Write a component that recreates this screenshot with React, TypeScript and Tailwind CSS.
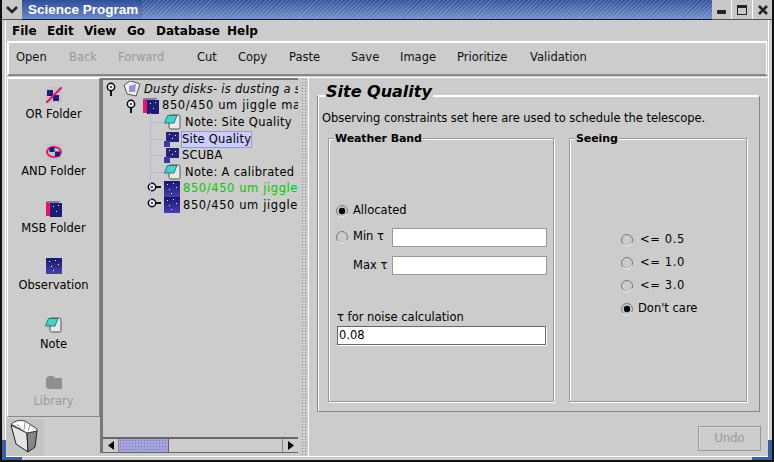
import React from "react";

const font = "font-['DejaVu_Sans',sans-serif]";

function Handle({ open }: { open: boolean }) {
  return (
    <svg width="14" height="14" viewBox="0 0 14 14" className="shrink-0">
      {open ? <path d="M5 9V14" stroke="#000" strokeWidth="1.8" /> : <path d="M9 5H14" stroke="#000" strokeWidth="1.8" />}
      <circle cx="5" cy="5" r="3.7" fill="#e8e8f8" stroke="#000" strokeWidth="1.4" />
      <circle cx="5" cy="5" r="1.1" fill="#333366" />
    </svg>
  );
}

function Obs({ s = 16 }: { s?: number }) {
  return (
    <svg width={s} height={s} viewBox="0 0 16 16" className="shrink-0">
      <defs>
        <linearGradient id="ob" x1="0" y1="0" x2="0" y2="1">
          <stop offset="0" stopColor="#17176b" />
          <stop offset="1" stopColor="#4a3fb0" />
        </linearGradient>
      </defs>
      <rect width="16" height="16" fill="url(#ob)" />
      <path d="M3 3h1v1H3zM9 2h1v1H9zM12 6h1v1h-1zM5 8h1v1H5zM7 12h1v1H7z" fill="#fff" />
    </svg>
  );
}

function Msb() {
  return (
    <svg width="16" height="16" viewBox="0 0 16 16" className="shrink-0">
      <rect x="0" y="1" width="4" height="14" fill="#f0106a" />
      <path d="M0 1L2 0H15L12 2H4z" fill="#7a7ab8" />
      <rect x="4" y="2" width="12" height="14" fill="#1c1c70" />
      <path d="M7 5h1v1H7zM12 4h1v1h-1zM10 10h1v1h-1z" fill="#fff" />
    </svg>
  );
}

function Sub() {
  return (
    <svg width="15" height="15" viewBox="0 0 15 15" className="shrink-0">
      <rect x="2" y="0" width="13" height="10" fill="#24247e" />
      <rect x="0" y="9" width="6" height="6" fill="#3a3aa0" />
      <path d="M5 2h1v1H5zM11 3h1v1h-1zM8 6h1v1H8z" fill="#fff" />
    </svg>
  );
}

function Note() {
  return (
    <svg width="17" height="16" viewBox="0 0 17 16" className="shrink-0">
      <rect x="5" y="1" width="11" height="14" rx="1.5" fill="#e8e8e8" stroke="#555" />
      <path d="M3.5 1.5H13L10 9H0.5z" fill="#45d4cc" stroke="#1e6d6d" strokeWidth="0.9" />
    </svg>
  );
}

function Radio({ on }: { on?: boolean }) {
  return (
    <svg width="14" height="14" viewBox="0 0 14 14" className="shrink-0">
      <circle cx="7" cy="7" r="5.5" fill="#ccc" stroke="#777" />
      <path d="M3 11.5A6 6 0 0 0 12 10" stroke="#fff" fill="none" />
      {on && <circle cx="7" cy="7" r="3.2" fill="#000" />}
    </svg>
  );
}

function PaletteItem({ icon, label, h, dim }: { icon: React.ReactNode; label: string; h: string; dim?: boolean }) {
  return (
    <div className={`flex flex-col items-center ${h}`}>
      <div className="h-[16px] flex items-center justify-center">{icon}</div>
      <span className={`text-[11.5px] leading-[14px] mt-[4px] ${dim ? "text-[#999]" : "text-black"}`}>{label}</span>
    </div>
  );
}

function TreeRow({ indent, children }: { indent: string; children: React.ReactNode }) {
  return <div className={`h-[16.6px] flex items-center whitespace-nowrap ${indent}`}>{children}</div>;
}

function Branch() {
  return <div className="w-[14px] h-[1px] shrink-0 bg-[#b8b8dc]" />;
}

const tools: [string, string, boolean?][] = [
  ["Open", "w-[53px]"],
  ["Back", "w-[49px]", true],
  ["Forward", "w-[79px]", true],
  ["Cut", "w-[41px]"],
  ["Copy", "w-[51px]"],
  ["Paste", "w-[62px]"],
  ["Save", "w-[49px]"],
  ["Image", "w-[57px]"],
  ["Prioritize", "w-[73px]"],
  ["Validation", "w-[70px]"],
];

const menus: [string, string][] = [
  ["File", "w-[35px]"],
  ["Edit", "w-[37px]"],
  ["View", "w-[43px]"],
  ["Go", "w-[29px]"],
  ["Database", "w-[71px]"],
  ["Help", "w-[40px]"],
];

export default function App() {
  return (
    <div className={`${font} relative w-[774px] h-[462px] overflow-hidden bg-[#cccccc] text-[11.5px] text-black flex flex-col border-l-2 border-r-2 border-b-2 border-[#111]`}>
      {/* title bar */}
      <div className="h-[20px] flex shrink-0">
        <div className="w-[20px] flex items-center justify-center bg-[#c8c8c8] border-b border-[#555]">
          <svg width="12" height="8" viewBox="0 0 12 8"><path d="M1 1L6 6L11 1" stroke="#222" strokeWidth="2.6" fill="none" /></svg>
        </div>
        <div className="w-[120px] shrink-0 flex items-center pl-[6px] border-b border-[#0d1a3a] bg-[linear-gradient(180deg,#2f4f9b,#6d8ac6)]">
          <span className="text-white font-['Liberation_Sans',sans-serif] font-bold text-[13.5px] leading-none whitespace-nowrap">Science Program</span>
        </div>
        <div className="flex-1 border-b border-[#0d1a3a] bg-[repeating-linear-gradient(135deg,rgba(255,255,255,0.16)_0px,rgba(255,255,255,0.16)_1.5px,transparent_1.5px,transparent_3px),linear-gradient(180deg,#2f4f9b,#6d8ac6)]" />
        <div className="w-[60px] flex bg-[#c8c8c8] border-b border-[#555]">
          <div className="w-[20px] flex items-center justify-center border-r border-white"><div className="w-[9px] h-[4px] bg-[#222] mt-[5px] rounded-[1px]" /></div>
          <div className="w-[21px] flex items-center justify-center border-r border-white"><div className="w-[10px] h-[10px] border border-[#222] border-t-[3px]" /></div>
          <div className="w-[19px] flex items-center justify-center">
            <svg width="10" height="10" viewBox="0 0 10 10"><path d="M1 1L9 9M9 1L1 9" stroke="#222" strokeWidth="2.6" /></svg>
          </div>
        </div>
      </div>

      {/* window body */}
      <div className="flex-1 min-h-0 flex flex-col ml-[3px] mr-[3px] mb-[3px] border-l border-r border-b border-white">
        {/* menu */}
        <div className="h-[21px] flex items-center pl-[6px] shrink-0 font-bold text-[12px]">
          {menus.map(([m, w]) => <span key={m} className={`${w}`}>{m}</span>)}
        </div>
        {/* toolbar */}
        <div className="h-[35px] shrink-0 mx-[1px] flex items-center pl-[7px] pb-[2px] border border-t-2 border-l-2 border-t-white border-l-white border-r-[#888] border-b-2 border-b-[#888] border-r-white">
          {tools.map(([t, w, d]) => <span key={t} className={`${w} ${d ? "text-[#999]" : "text-[#111]"}`}>{t}</span>)}
        </div>
        {/* main */}
        <div className="flex-1 min-h-0 flex border-t border-white mt-[1px]">
          {/* palette column */}
          <div className="w-[94px] shrink-0 flex flex-col pl-[1px]">
            <div className="h-[340px] border border-[#888] border-t-white border-l-white flex flex-col pt-[8px]">
              <PaletteItem h="h-[57px]" label="OR Folder" icon={
                <svg width="16" height="16" viewBox="0 0 16 16"><rect width="16" height="16" fill="#c4c4c4" /><rect x="1" y="3" width="6" height="6" fill="#1c1c80" /><rect x="7" y="8" width="6" height="6" fill="#1c1c80" /><path d="M0 16L16 0" stroke="#f0106a" strokeWidth="2" /></svg>
              } />
              <PaletteItem h="h-[57px]" label="AND Folder" icon={
                <svg width="16" height="16" viewBox="0 0 16 16"><rect width="16" height="16" fill="#c4c4c4" /><ellipse cx="8" cy="8" rx="7" ry="5" fill="none" stroke="#f0106a" strokeWidth="2" /><rect x="3.5" y="3" width="5" height="5" fill="#1c1c80" /><rect x="9" y="7.5" width="5" height="5" fill="#1c1c80" /></svg>
              } />
              <PaletteItem h="h-[57px]" label="MSB Folder" icon={<Msb />} />
              <PaletteItem h="h-[59px]" label="Observation" icon={<Obs />} />
              <PaletteItem h="h-[57px]" label="Note" icon={<Note />} />
              <PaletteItem h="h-[40px]" dim label="Library" icon={
                <svg width="16" height="13" viewBox="0 0 16 13"><path d="M0 3Q1 0 4 0H7L9 2H16V13H3Q0 13 0 10z" fill="#8f8f8f" /></svg>
              } />
            </div>
            <div className="h-[39px] pt-[2px]">
              <svg width="37" height="37" viewBox="0 0 37 37" className="bg-[#c4c4c4]">
                <path d="M4 6L9 25L21 33L20 14z" fill="#e4e4e4" stroke="#222" />
                <path d="M20 14L30 12L28 28L21 33z" fill="#858585" stroke="#222" />
                <path d="M4 5Q10 0 18 2L30 10V12L20 14z" fill="#ffffff" stroke="#444" />
                <path d="M10 5L15 11M18 3L17 11M23 6L21 12" stroke="#999" fill="none" />
              </svg>
            </div>
          </div>

          {/* tree column */}
          <div className="w-[198px] shrink-0 mb-[3px] border-l-[3px] border-t-2 border-[#777] flex flex-col bg-[#cccccc]">
            <div className="flex-1 min-h-0 overflow-hidden pt-[1.5px] relative">
              <div className="absolute left-[47px] top-[33px] w-[1px] h-[88px] bg-[#b8b8dc]" />
              <TreeRow indent="pl-[3px] gap-[3px] -mt-[0.5px]">
                <Handle open />
                <svg width="18" height="16" viewBox="0 0 18 16" className="shrink-0"><path d="M1 4L7 0L11 1L17 3L13 15L4 13z" fill="#eee" stroke="#555" /><path d="M6 5L13 3L12 11L6 11z" fill="#9b8fe0" /></svg>
                <span className="italic tracking-[0.25px]">Dusty disks- is dusting a s</span>
              </TreeRow>
              <TreeRow indent="pl-[23px] gap-[3px]">
                <Handle open />
                <Msb />
                <span className="tracking-[0.6px]">850/450 um jiggle ma</span>
              </TreeRow>
              <TreeRow indent="pl-[47px]"><Branch /><Note /><span className="ml-[4px] tracking-[0.3px]">Note: Site Quality</span></TreeRow>
              <TreeRow indent="pl-[47px]"><Branch /><Sub /><span className="ml-[2px] bg-[#ccccff] border border-[#9999cc] leading-[15px] tracking-[0.2px]">Site Quality</span></TreeRow>
              <TreeRow indent="pl-[47px]"><Branch /><Sub /><span className="ml-[3px] tracking-[0.2px]">SCUBA</span></TreeRow>
              <TreeRow indent="pl-[47px]"><Branch /><Note /><span className="ml-[4px] tracking-[0.3px]">Note: A calibrated 8</span></TreeRow>
              <TreeRow indent="pl-[44px] gap-[3px]"><Handle open={false} /><Obs /><span className="text-[#00c800] tracking-[0.6px]">850/450 um jiggle</span></TreeRow>
              <TreeRow indent="pl-[44px] gap-[3px]"><Handle open={false} /><Obs /><span className="tracking-[0.6px]">850/450 um jiggle</span></TreeRow>
            </div>
            {/* horizontal scrollbar */}
            <div className="h-[16px] shrink-0 flex border-t-2 border-b border-[#666]">
              <div className="w-[16px] flex items-center justify-center border-r border-[#888]"><svg width="6" height="9" viewBox="0 0 6 9"><path d="M6 0V9L0 4.5z" /></svg></div>
              <div className="w-[50px] bg-[#a5a5dc] border-r border-[#666] bg-[radial-gradient(#7070b0_1px,transparent_1px)] bg-[length:3px_3px]" />
              <div className="flex-1" />
              <div className="w-[16px] flex items-center justify-center border-l border-[#888]"><svg width="6" height="9" viewBox="0 0 6 9"><path d="M0 0V9L6 4.5z" /></svg></div>
            </div>
          </div>

          {/* divider */}
          <div className="w-[11px] shrink-0 flex justify-center border-r border-white">
            <div className="w-[5px] h-full bg-[radial-gradient(#8c8c8c_1px,transparent_1px)] bg-[length:3px_3px]" />
          </div>

          {/* right panel */}
          <div className="flex-1 min-w-0 flex flex-col pl-[8px] pr-[8px]">
            <div className="relative mt-[17px] h-[317px] border border-[#888] border-t-white border-l-[#888] shadow-[inset_1px_1px_0_#fff]">
              <span className="absolute left-[7px] top-[-14px] px-[1px] bg-[#cccccc] italic font-bold text-[16px] leading-[20px]">Site Quality</span>
              <p className="pl-[4px] mt-[15px] leading-[14px] tracking-[-0.05px] whitespace-nowrap">Observing constraints set here are used to schedule the telescope.</p>
              <div className="flex gap-[15px] ml-[10px] mt-[13px] h-[264px]">
                {/* weather */}
                <div className="relative w-[226px] border border-[#999] shadow-[inset_1px_1px_0_#fff,1px_1px_0_#fff] flex flex-col pl-[8px] pt-[58px]">
                  <span className="absolute left-[5px] top-[-7px] px-[1px] bg-[#cccccc] font-bold text-[11px] tracking-[-0.1px] leading-[14px]">Weather Band</span>
                  <div className="h-[26px] flex items-center gap-[4px] -ml-[2px] mt-[1px]"><Radio on /><span>Allocated</span></div>
                  <div className="h-[26px] flex items-center -ml-[2px]">
                    <Radio /><span className="ml-[4px] w-[39px]">Min τ</span>
                    <div className="w-[155px] h-[19px] bg-white border border-[#999]" />
                  </div>
                  <div className="h-[29px] flex items-center pl-[18px] -ml-[2px] mt-[1px]">
                    <span className="w-[39px]">Max τ</span>
                    <div className="w-[155px] h-[19px] bg-white border border-[#999]" />
                  </div>
                  <span className="mt-[30px] leading-[14px]">τ for noise calculation</span>
                  <div className="mt-[2px] w-[209px] h-[19px] bg-white border border-[#666] pl-[1px] leading-[17px] shadow-[1px_1px_0_#fff]">0.08</div>
                </div>
                {/* seeing */}
                <div className="relative w-[178px] border border-[#999] shadow-[inset_1px_1px_0_#fff,1px_1px_0_#fff] flex flex-col pl-[50px] pt-[89px]">
                  <span className="absolute left-[5px] top-[-7px] px-[1px] bg-[#cccccc] font-bold text-[11px] tracking-[-0.1px] leading-[14px]">Seeing</span>
                  {["<= 0.5", "<= 1.0", "<= 3.0"].map((t) => (
                    <div key={t} className="h-[23px] flex items-center gap-[6px]"><Radio /><span className="whitespace-pre tracking-[0.6px]">{t}</span></div>
                  ))}
                  <div className="h-[23px] flex items-center gap-[4px]"><Radio on /><span>Don't care</span></div>
                </div>
              </div>
            </div>
            <div className="flex justify-end mt-[14px]">
              <div className="w-[63px] h-[25px] -mr-[1px] border border-[#999] shadow-[inset_1px_1px_0_#ddd] flex items-center justify-center text-[#999]">Undo</div>
            </div>
          </div>
        </div>
      </div>

      {/* window corners */}
      <div className="absolute left-[0px] bottom-[0px] w-[20px] h-[3px] bg-[#3d5ea6]" />
      <div className="absolute left-[-1px] bottom-[0px] w-[5px] h-[20px] bg-[#3d5ea6]" />
      <div className="absolute right-[0px] bottom-[0px] w-[20px] h-[3px] bg-[#3d5ea6]" />
      <div className="absolute right-[0px] bottom-[0px] w-[4px] h-[20px] bg-[#3d5ea6]" />
    </div>
  );
}
